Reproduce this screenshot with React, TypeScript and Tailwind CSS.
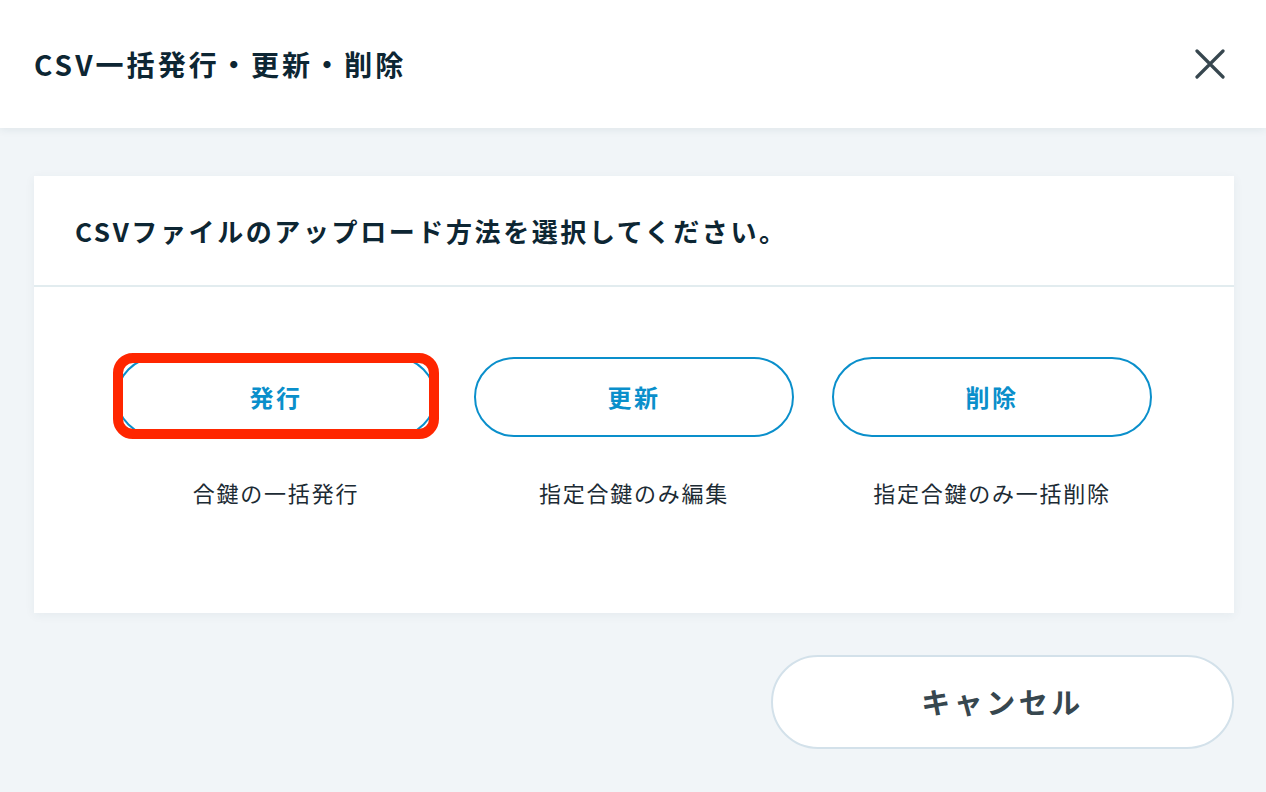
import React from "react";

const font = { fontFamily: '"Noto Sans CJK JP", "Noto Sans", sans-serif' };

const options = [
  { label: "発行", desc: "合鍵の一括発行", highlighted: true },
  { label: "更新", desc: "指定合鍵のみ編集", highlighted: false },
  { label: "削除", desc: "指定合鍵のみ一括削除", highlighted: false },
];

const CloseIcon: React.FC = () => (
  <svg width="30" height="30" viewBox="0 0 30 30" fill="none">
    <path
      d="M2 2 L28 28 M28 2 L2 28"
      stroke="#37474f"
      strokeWidth="3.2"
      strokeLinecap="round"
    />
  </svg>
);

const App: React.FC = () => {
  return (
    <div className="min-h-[792px] w-full bg-[#f1f5f8] text-[#0d2633]" style={font}>
      {/* Header */}
      <header className="relative z-10 flex h-[128px] items-center justify-between bg-white pl-[34px] pr-[32px] shadow-[0_2px_8px_rgba(30,60,80,0.08)]">
        <h1 className="text-[28px] font-bold tracking-[0.11em] text-[#0d2633]">
          CSV一括発行・更新・削除
        </h1>
        <button className="mr-[9px] flex h-[30px] w-[30px] items-center justify-center">
          <CloseIcon />
        </button>
      </header>

      <main className="pl-[34px] pr-[32px] pt-[48px]">
        {/* Card */}
        <section className="bg-white shadow-[0_2px_10px_rgba(30,60,80,0.06)]">
          <div className="flex h-[111px] items-center border-b-2 border-[#e2ecef] px-[41px]">
            <p className="text-[26px] font-bold tracking-[0.1em] text-[#0d2633]">
              CSVファイルのアップロード方法を選択してください。
            </p>
          </div>

          <div className="flex justify-center gap-[38px] pb-[107px] pt-[70px]">
            {options.map((opt) => (
              <div key={opt.label} className="flex w-[320px] flex-col items-center">
                <div className="relative w-full">
                  <button className="flex h-[80px] w-full items-center justify-center rounded-full border-2 border-[#0a8fcb] bg-white text-[24px] font-bold tracking-[0.1em] text-[#0a8fcb]">
                    {opt.label}
                  </button>
                  {opt.highlighted && (
                    <div className="pointer-events-none absolute -bottom-[2px] -left-[3px] -right-[3px] -top-[4px] rounded-[20px] border-[10px] border-[#ff2600]" />
                  )}
                </div>
                <p className="mt-[41px] text-[22px] leading-[28px] tracking-[0.08em] text-[#1c2b34]">
                  {opt.desc}
                </p>
              </div>
            ))}
          </div>
        </section>

        {/* Footer */}
        <div className="flex justify-end pt-[42px]">
          <button className="flex h-[94px] w-[463px] items-center justify-center rounded-full border-2 border-[#d3e1ea] bg-white text-[29px] font-bold tracking-[0.12em] text-[#37474f]">
            キャンセル
          </button>
        </div>
      </main>
    </div>
  );
};

export default App;
